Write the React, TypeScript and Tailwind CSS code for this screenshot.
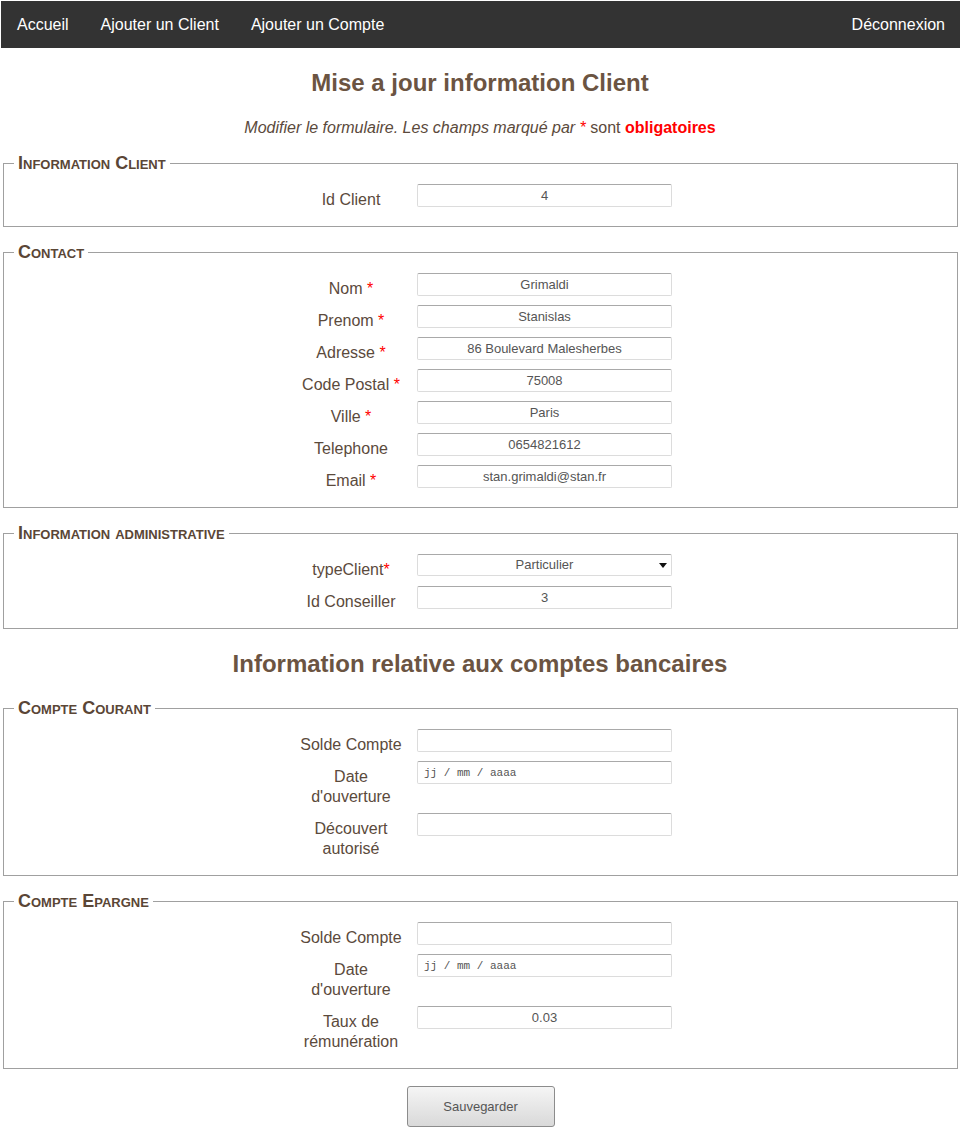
import React from "react";

type Field = {
  label: string;
  req?: boolean;
  tight?: boolean;
  value?: string;
  kind?: "text" | "date" | "select";
};

const SECTIONS_CLIENT: { title: string; fields: Field[] }[] = [
  {
    title: "Information Client",
    fields: [{ label: "Id Client", value: "4" }],
  },
  {
    title: "Contact",
    fields: [
      { label: "Nom", req: true, value: "Grimaldi" },
      { label: "Prenom", req: true, value: "Stanislas" },
      { label: "Adresse", req: true, value: "86 Boulevard Malesherbes" },
      { label: "Code Postal", req: true, value: "75008" },
      { label: "Ville", req: true, value: "Paris" },
      { label: "Telephone", value: "0654821612" },
      { label: "Email", req: true, value: "stan.grimaldi@stan.fr" },
    ],
  },
  {
    title: "Information administrative",
    fields: [
      { label: "typeClient", req: true, tight: true, value: "Particulier", kind: "select" },
      { label: "Id Conseiller", value: "3" },
    ],
  },
];

const SECTIONS_COMPTES: { title: string; fields: Field[] }[] = [
  {
    title: "Compte Courant",
    fields: [
      { label: "Solde Compte", value: "" },
      { label: "Date d'ouverture", kind: "date" },
      { label: "Découvert autorisé", value: "" },
    ],
  },
  {
    title: "Compte Epargne",
    fields: [
      { label: "Solde Compte", value: "" },
      { label: "Date d'ouverture", kind: "date" },
      { label: "Taux de rémunération", value: "0.03" },
    ],
  },
];

// shared look of the inputs, font size set per kind
const inputBox =
  "block w-[255px] rounded-[2px] border border-[#dcdcdc] border-t-[#a9a9a9] bg-white text-[#555] outline-none";

function FieldRow({ field }: { field: Field }) {
  return (
    <div className="flex items-start justify-center gap-[11px] pb-[6px] pl-[7px]">
      <label className="mt-[6px] w-[110px] text-center text-[16px] leading-[20px] text-[#5b4a3c]">
        {field.label}
        {field.req && (
          <span className="text-[#f00]">{field.tight ? "*" : " *"}</span>
        )}
      </label>
      {field.kind === "select" ? (
        <div className="relative">
          <select
            defaultValue={field.value}
            className={`${inputBox} h-[22px] appearance-none text-center text-[13px] [text-align-last:center]`}
          >
            <option>Particulier</option>
            <option>Entreprise</option>
          </select>
          <svg className="pointer-events-none absolute right-[5px] top-[9px]" width="8" height="5" viewBox="0 0 8 5">
            <path d="M0 0h8L4 5z" fill="#111" />
          </svg>
        </div>
      ) : field.kind === "date" ? (
        <input
          type="text"
          placeholder="jj / mm / aaaa"
          className={`${inputBox} h-[23px] px-[6px] text-left font-['Liberation_Mono',monospace] text-[11px] placeholder:text-[#555]`}
        />
      ) : (
        <input
          type="text"
          defaultValue={field.value}
          className={`${inputBox} h-[23px] text-center text-[13px]`}
        />
      )}
    </div>
  );
}

function Section({ title, fields }: { title: string; fields: Field[] }) {
  return (
    <fieldset className="mr-[2px] ml-[3px] mt-[17px] border border-[#a0a0a0] px-[10px] pt-[13px] pb-[10px]">
      <legend className="px-[4px] text-[18px] font-bold leading-[16px] text-[#5a4636] [font-variant:small-caps]">
        {title}
      </legend>
      {fields.map((f) => (
        <FieldRow key={f.label} field={f} />
      ))}
    </fieldset>
  );
}

export default function App() {
  return (
    <div className="min-h-[1140px] bg-white pb-[14px] font-['Liberation_Sans',Arial,sans-serif]">
      <nav className="ml-[1px] mt-[1px] flex h-[47px] items-center bg-[#333] text-[16px] text-white">
        <a className="px-[16px]" href="#">Accueil</a>
        <a className="px-[16px]" href="#">Ajouter un Client</a>
        <a className="px-[16px]" href="#">Ajouter un Compte</a>
        <a className="ml-auto pl-[16px] pr-[15px]" href="#">Déconnexion</a>
      </nav>

      <h1 className="mt-[21px] text-center text-[24px] font-bold leading-[28px] text-[#6b5442]">
        Mise a jour information Client
      </h1>
      <p className="mt-[21px] text-center text-[16px] leading-[20px] text-[#5b4a3c]">
        <i>
          Modifier le formulaire. Les champs marqué par <span className="text-[#f00]">*</span>
        </i>{" "}
        sont <b className="text-[#f00]">obligatoires</b>
      </p>

      <form>
        {SECTIONS_CLIENT.map((s) => (
          <Section key={s.title} title={s.title} fields={s.fields} />
        ))}

        <h2 className="mt-[21px] text-center text-[24px] font-bold leading-[28px] text-[#6b5442]">
          Information relative aux comptes bancaires
        </h2>

        <div className="pt-[5px]">
          {SECTIONS_COMPTES.map((s) => (
            <Section key={s.title} title={s.title} fields={s.fields} />
          ))}
        </div>

        <div className="mt-[17px] flex justify-center pl-[1px]">
          <button
            type="button"
            className="h-[41px] w-[148px] rounded-[3px] border border-[#8c8c8c] bg-linear-to-b from-[#f5f5f5] to-[#d9d9d9] text-[13px] text-[#555]"
          >
            Sauvegarder
          </button>
        </div>
      </form>
    </div>
  );
}
